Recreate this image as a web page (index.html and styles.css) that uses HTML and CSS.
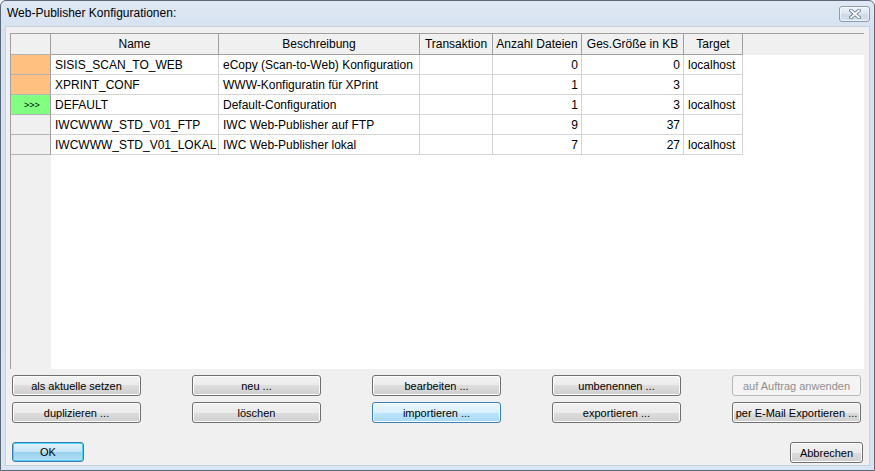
FILE: index.html
```html
<!DOCTYPE html>
<html lang="de">
<head>
    <meta charset="UTF-8">
    <title>Web-Publisher Konfigurationen</title>
    <link rel="stylesheet" href="styles.css">
</head>
<body>
    <div class="window">
        <div class="titlebar">
            <span class="title">Web-Publisher Konfigurationen:</span>
            <button class="close" title="Schließen">
                <svg width="12" height="10" viewBox="0 0 12 10">
                    <path d="M2 1.5 L10 8.5 M10 1.5 L2 8.5" stroke="#6d7d90" stroke-width="3.6" stroke-linecap="square"/>
                    <path d="M2 1.5 L10 8.5 M10 1.5 L2 8.5" stroke="#fff" stroke-width="1.8" stroke-linecap="square"/>
                </svg>
            </button>
        </div>

        <div class="client">
            <div class="grid">
                <table class="configs">
                    <colgroup>
                        <col class="w-rowhead">
                        <col class="w-name">
                        <col class="w-desc">
                        <col class="w-trans">
                        <col class="w-count">
                        <col class="w-size">
                        <col class="w-target">
                        <col>
                    </colgroup>
                    <thead>
                        <tr>
                            <th class="rowhead"></th>
                            <th>Name</th>
                            <th>Beschreibung</th>
                            <th>Transaktion</th>
                            <th>Anzahl Dateien</th>
                            <th>Ges.Größe in KB</th>
                            <th>Target</th>
                            <th class="filler"></th>
                        </tr>
                    </thead>
                    <tbody>
                        <tr>
                            <td class="rowhead mark-orange"></td>
                            <td>SISIS_SCAN_TO_WEB</td>
                            <td>eCopy (Scan-to-Web) Konfiguration</td>
                            <td></td>
                            <td class="num">0</td>
                            <td class="num">0</td>
                            <td>localhost</td>
                            <td class="filler"></td>
                        </tr>
                        <tr>
                            <td class="rowhead mark-orange"></td>
                            <td>XPRINT_CONF</td>
                            <td>WWW-Konfiguratin für XPrint</td>
                            <td></td>
                            <td class="num">1</td>
                            <td class="num">3</td>
                            <td></td>
                            <td class="filler"></td>
                        </tr>
                        <tr>
                            <td class="rowhead mark-current">&gt;&gt;&gt;</td>
                            <td>DEFAULT</td>
                            <td>Default-Configuration</td>
                            <td></td>
                            <td class="num">1</td>
                            <td class="num">3</td>
                            <td>localhost</td>
                            <td class="filler"></td>
                        </tr>
                        <tr>
                            <td class="rowhead"></td>
                            <td>IWCWWW_STD_V01_FTP</td>
                            <td>IWC Web-Publisher auf FTP</td>
                            <td></td>
                            <td class="num">9</td>
                            <td class="num">37</td>
                            <td></td>
                            <td class="filler"></td>
                        </tr>
                        <tr>
                            <td class="rowhead"></td>
                            <td>IWCWWW_STD_V01_LOKAL</td>
                            <td>IWC Web-Publisher lokal</td>
                            <td></td>
                            <td class="num">7</td>
                            <td class="num">27</td>
                            <td>localhost</td>
                            <td class="filler"></td>
                        </tr>
                    </tbody>
                </table>
            </div>

            <div class="actions">
                <button class="btn">als aktuelle setzen</button>
                <button class="btn">neu ...</button>
                <button class="btn">bearbeiten ...</button>
                <button class="btn">umbenennen ...</button>
                <button class="btn" disabled>auf Auftrag anwenden</button>
                <button class="btn">duplizieren ...</button>
                <button class="btn">löschen</button>
                <button class="btn hot">importieren ...</button>
                <button class="btn">exportieren ...</button>
                <button class="btn">per E-Mail Exportieren ...</button>
            </div>

            <div class="footer">
                <button class="btn default">OK</button>
                <button class="btn cancel">Abbrechen</button>
            </div>
        </div>
    </div>
</body>
</html>
```

FILE: styles.css
```css
* {
    box-sizing: border-box;
}

body {
    margin: 0;
    font-family: 'Liberation Sans', Arial, sans-serif;
    font-size: 12px;
    background-color: #fff;
}

.window {
    width: 875px;
    height: 471px;
    display: flex;
    flex-direction: column;
    border: 1px solid #5a6878;
    border-radius: 6px 6px 0 0;
    background: linear-gradient(#dfe8f4, #d6e2f1 30px, #d9e4f2);
}

.titlebar {
    height: 25px;
    display: flex;
    align-items: flex-start;
    padding: 0 4px 0 6px;
}

.title {
    margin-top: 5px;
    color: #000;
    font-size: 12px;
}

.close {
    margin-left: auto;
    margin-top: 5px;
    width: 31px;
    height: 16px;
    padding: 0;
    display: flex;
    align-items: center;
    justify-content: center;
    border: 1px solid #8d9cb0;
    border-radius: 3px;
    background: linear-gradient(#edf2f9, #dbe4f0 50%, #cdd9e8 50%, #d6e1ee);
    box-shadow: inset 0 0 0 1px rgba(255, 255, 255, 0.6);
}

.client {
    flex: 1;
    margin: 0 4px 4px 4px;
    padding: 6px 0 0 4px;
    background-color: #f0f0f0;
    border: 1px solid #c5d2e2;
}

/* table area */

.grid {
    width: 854px;
    height: 336px;
    border-top: 1px solid #a0a0a0;
    border-left: 1px solid #a0a0a0;
    background: linear-gradient(to right, #f0f0f0 40px, #fff 40px);
}

.configs {
    width: 100%;
    table-layout: fixed;
    border-collapse: separate;
    border-spacing: 0;
}

.w-rowhead { width: 40px; }
.w-name { width: 168px; }
.w-desc { width: 201px; }
.w-trans { width: 73px; }
.w-count { width: 89px; }
.w-size { width: 102px; }
.w-target { width: 59px; }

.configs th {
    height: 21px;
    padding: 0 2px;
    font-weight: normal;
    text-align: center;
    white-space: nowrap;
    overflow: hidden;
    background-color: #f0f0f0;
    border-right: 1px solid #a0a0a0;
    border-bottom: 1px solid #a0a0a0;
}

.configs td {
    height: 20px;
    padding: 0 3px 0 4px;
    white-space: nowrap;
    overflow: hidden;
    background-color: #fff;
    border-right: 1px solid #d5d5d5;
    border-bottom: 1px solid #d5d5d5;
}

.configs td.num {
    text-align: right;
}

.configs .rowhead,
.configs td.rowhead {
    background-color: #f0f0f0;
    border-right: 1px solid #a0a0a0;
    border-bottom: 1px solid #b4b4b4;
}

.configs td.mark-orange {
    background-color: #ffc080;
}

.configs td.mark-current {
    background-color: #80ff80;
    font-size: 9px;
    padding-left: 13px;
}

.configs th.filler {
    border: none;
}

.configs td.filler {
    border: none;
    background: transparent;
}

/* buttons */

.actions {
    width: 849px;
    margin: 6px 0 0 2px;
    display: grid;
    grid-template-columns: repeat(5, 129px);
    justify-content: space-between;
    row-gap: 6px;
}

.btn {
    height: 21px;
    padding: 0;
    font-family: 'Liberation Sans', Arial, sans-serif;
    font-size: 11px;
    color: #000;
    border: 1px solid #707070;
    border-radius: 3px;
    background: linear-gradient(#f2f2f2, #ebebeb 50%, #dddddd 50%, #cfcfcf);
    box-shadow: inset 0 0 0 1px #fbfbfb;
}

.btn:disabled {
    color: #8f8f8f;
    border-color: #b5b8bb;
    background: #f4f4f4;
    box-shadow: none;
}

.btn.hot {
    border-color: #3c7fb1;
    background: linear-gradient(#eaf6fd, #d9f0fc 50%, #bee6fd 50%, #a7d9f5);
}

.footer {
    width: 851px;
    margin: 19px 0 0 2px;
    display: flex;
    justify-content: space-between;
}

.btn.default {
    width: 72px;
    height: 20px;
    border-color: #3c7fb1;
    background: linear-gradient(#e5f4fc, #c4e5f6 50%, #98d1ef 50%, #b6e0f5);
    box-shadow: inset 0 0 0 1px #48d0f8;
}

.btn.cancel {
    width: 73px;
}
```
